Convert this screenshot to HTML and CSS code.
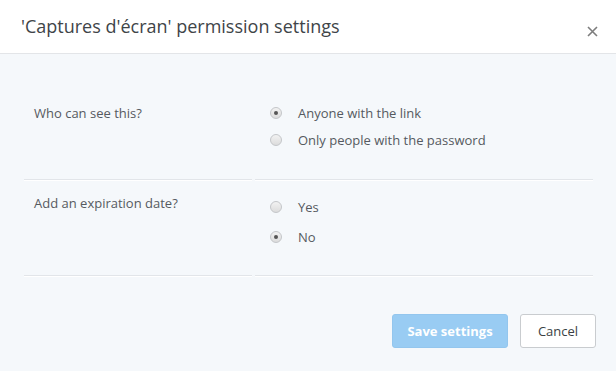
FILE: index.html
```html
<!DOCTYPE html>
<html>
<head>
<meta charset="utf-8">
<link rel="stylesheet" href="styles.css">
</head>
<body>
<div class="modal">
  <header class="modal-header">
    <h1 class="modal-title">'Captures d'écran' permission settings</h1>
    <button class="close" aria-label="Close">
      <svg width="11" height="11" viewBox="0 0 11 11"><path d="M1 1L10 10M10 1L1 10" stroke="#7d7d7d" stroke-width="1.6" fill="none"/></svg>
    </button>
  </header>
  <div class="modal-body">
    <div class="row row-first">
      <div class="label">Who can see this?</div>
      <div class="options">
        <div class="option"><span class="radio checked"></span><span>Anyone with the link</span></div>
        <div class="option"><span class="radio"></span><span>Only people with the password</span></div>
      </div>
    </div>
    <div class="row row-second">
      <div class="label">Add an expiration date?</div>
      <div class="options">
        <div class="option"><span class="radio"></span><span>Yes</span></div>
        <div class="option"><span class="radio checked"></span><span>No</span></div>
      </div>
    </div>
    <div class="footer">
      <button class="btn btn-primary">Save settings</button>
      <button class="btn btn-default">Cancel</button>
    </div>
  </div>
</div>
</body>
</html>
```
FILE: styles.css
```css
html, body {
  margin: 0;
  padding: 0;
  background: #f5f8fb;
  font-family: "Open Sans", "Liberation Sans", sans-serif;
  color: #4a4f55;
}
.modal {
  width: 616px;
  height: 371px;
  display: flex;
  flex-direction: column;
}
.modal-header {
  height: 54px;
  box-sizing: border-box;
  background: #fff;
  border-bottom: 1px solid #e3e5e8;
  display: flex;
  align-items: center;
  justify-content: space-between;
  padding: 0 18px 0 21px;
}
.modal-title {
  margin: 0;
  font-size: 18px;
  font-weight: 400;
  color: #404448;
  line-height: 24px;
  position: relative;
  top: -1px;
}
.close {
  border: 0;
  background: none;
  padding: 0;
  width: 11px;
  height: 11px;
  display: flex;
  position: relative;
  top: 5px;
}
.modal-body {
  flex: 1;
  padding: 0 20px 0 24px;
}
.row {
  display: grid;
  grid-template-columns: 228px 338px;
  column-gap: 3px;
}
.row > .label,
.row > .options {
  border-bottom: 1px solid #e2e5e9;
  box-shadow: 0 1px 0 #ffffff;
}
.label {
  padding-left: 10px;
  font-size: 13px;
  line-height: 20px;
  color: #555a60;
}
.options {
  padding-left: 15px;
  display: flex;
  flex-direction: column;
}
.option {
  display: flex;
  align-items: center;
  font-size: 13px;
  line-height: 20px;
  color: #555a60;
}
.radio {
  width: 12px;
  height: 12px;
  box-sizing: border-box;
  border-radius: 50%;
  border: 1px solid #c4c6c9;
  background: linear-gradient(#f2f2f2, #dcdcdc);
  margin-right: 16px;
  flex: none;
  display: flex;
  align-items: center;
  justify-content: center;
}
.radio.checked::after {
  content: "";
  width: 4px;
  height: 4px;
  border-radius: 50%;
  background: #555;
}
.row-first {
  padding-top: 49px;
}
.row-first > .label,
.row-first > .options {
  padding-bottom: 29px;
}
.row-first .options {
  gap: 7px;
}
.row-second > .label {
  padding-top: 13px;
  padding-bottom: 62px;
}
.row-second > .options {
  padding-top: 17px;
  padding-bottom: 28px;
  gap: 10px;
}
.footer {
  display: flex;
  justify-content: flex-end;
  gap: 12px;
  padding-top: 38px;
}
.btn {
  height: 34px;
  box-sizing: border-box;
  border-radius: 3px;
  font-family: "Open Sans", "Liberation Sans", sans-serif;
  font-size: 13px;
  padding: 0;
  white-space: nowrap;
}
.btn-primary {
  width: 116px;
  background: #99ccf3;
  border: 1px solid #93c6ee;
  color: #fff;
  font-weight: 700;
}
.btn-default {
  width: 76px;
  background: #fff;
  border: 1px solid #c9cccf;
  color: #3a3f44;
}
```
